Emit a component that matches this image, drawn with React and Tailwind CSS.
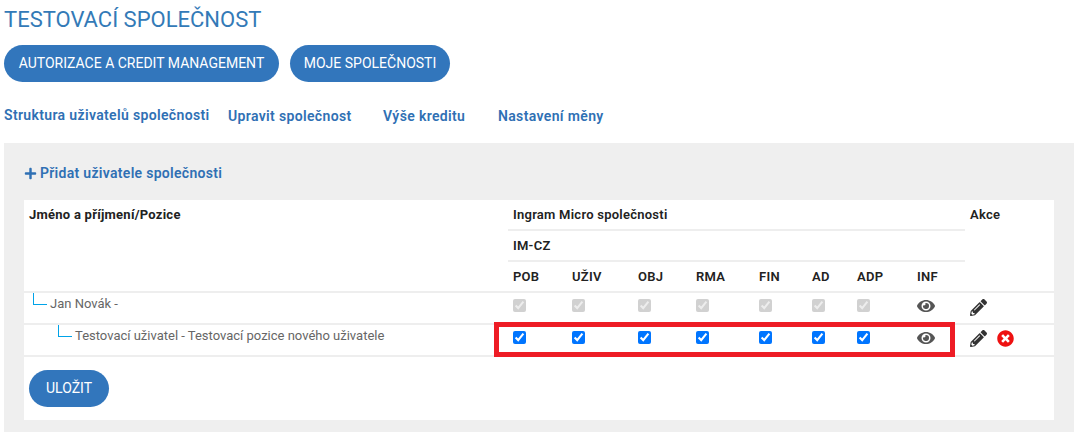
import { FaEye, FaPencilAlt, FaPlus, FaTimesCircle } from 'react-icons/fa'

const columns = [
    ['POB', 'w-[59px]'],
    ['UŽIV', 'w-[66px]'],
    ['OBJ', 'w-[58px]'],
    ['RMA', 'w-[63px]'],
    ['FIN', 'w-[53px]'],
    ['AD', 'w-[45px]'],
    ['ADP', 'w-[60px]'],
]

const PermissionCells = ({ disabled }) => (
    <>
        {columns.map(([name]) => (
            <td key={name} className="pl-[5px] align-top pt-[6px]">
                <input type="checkbox" defaultChecked disabled={disabled} className="block m-0 w-[13px] h-[13px]" />
            </td>
        ))}
        <td className="pl-[5px] align-top pt-[5px]">
            <FaEye className="w-[18px] h-[18px] text-[#555] -mt-[1px]" />
        </td>
    </>
)

const TreeLabel = ({ indent, children }) => (
    <div className={`flex items-start h-full ${indent}`}>
        <span className="block w-[14px] h-[12px] border-l border-b border-[#00a3e8] mr-[3px] shrink-0" />
        <span className="text-[13px] tracking-normal leading-[22px] text-[#666]">{children}</span>
    </div>
)

export default function App() {
    return (
        <main className="h-[437px] overflow-hidden bg-white pt-[8px] px-[4px] font-['Roboto',sans-serif]">
            <h1 className="text-[22px] leading-[24px] text-[#337ab7]">TESTOVACÍ SPOLEČNOST</h1>

            <div className="flex gap-[11px] mt-[13px]">
                <button className="h-[37px] w-[275px] rounded-full bg-[#3276bc] text-white text-[14px]">AUTORIZACE A CREDIT MANAGEMENT</button>
                <button className="h-[37px] w-[160px] rounded-full bg-[#3276bc] text-white text-[14px]">MOJE SPOLEČNOSTI</button>
            </div>

            <nav className="flex mt-[24px] h-[20px] text-[14px] tracking-[0.35px] leading-[20px] font-semibold text-[#2f70b4]">
                <a className="w-[224px] -mt-[1px]">Struktura uživatelů společnosti</a>
                <a className="w-[155px]">Upravit společnost</a>
                <a className="w-[115px]">Výše kreditu</a>
                <a>Nastavení měny</a>
            </nav>

            <section className="mt-[17px] w-[1070px] h-[289px] bg-[#efefef] pt-[20px] px-[20px]">
                <a className="flex items-center h-[20px] text-[14px] tracking-[0.3px] font-semibold text-[#2f70b4]">
                    <FaPlus className="w-[13px] h-[13px] mr-[3px]" />
                    Přidat uživatele společnosti
                </a>

                <div className="relative mt-[17px] h-[220px] bg-white">
                    <table className="w-[1030px] table-fixed border-collapse text-[13px] tracking-[0.25px] text-[#222]">
                        <colgroup>
                            <col className="w-[484px]" />
                            {columns.map(([name, width]) => <col key={name} className={width} />)}
                            <col className="w-[53px]" />
                            <col className="w-[89px]" />
                        </colgroup>
                        <thead>
                            <tr className="h-[30px]">
                                <th rowSpan={3} className="pl-[5px] pt-[5px] text-left align-top font-bold border-b-2 border-[#eeeeee]">Jméno a příjmení/Pozice</th>
                                <th colSpan={8} className="pl-[5px] text-left font-semibold border-b-2 border-[#eeeeee]">Ingram Micro společnosti</th>
                                <th rowSpan={3} className="pl-[5px] pt-[5px] text-left align-top font-semibold border-b-2 border-[#eeeeee]">Akce</th>
                            </tr>
                            <tr className="h-[31px]">
                                <th colSpan={8} className="pl-[5px] text-left font-semibold border-b-2 border-[#eeeeee]">IM-CZ</th>
                            </tr>
                            <tr className="h-[31px]">
                                {columns.map(([name]) => (
                                    <th key={name} className="pl-[5px] text-left font-semibold border-b-2 border-[#eeeeee]">{name}</th>
                                ))}
                                <th className="pl-[5px] text-left font-semibold border-b-2 border-[#eeeeee]">INF</th>
                            </tr>
                        </thead>
                        <tbody>
                            <tr className="h-[32px] border-b-2 border-[#eeeeee]">
                                <td className="align-top"><TreeLabel indent="pl-[9px]">Jan Novák -</TreeLabel></td>
                                <PermissionCells disabled />
                                <td className="pl-[5px] align-top pt-[5px]">
                                    <FaPencilAlt className="w-[17px] h-[17px] text-[#333] mt-[1px]" />
                                </td>
                            </tr>
                            <tr className="h-[32px] border-b-2 border-[#eeeeee]">
                                <td className="align-top"><TreeLabel indent="pl-[34px]">Testovací uživatel - Testovací pozice nového uživatele</TreeLabel></td>
                                <PermissionCells />
                                <td className="pl-[5px] align-top pt-[5px]">
                                    <div className="flex items-center gap-[10px]">
                                        <FaPencilAlt className="w-[17px] h-[17px] text-[#333]" />
                                        <FaTimesCircle className="w-[17px] h-[17px] text-[#ee1111]" />
                                    </div>
                                </td>
                            </tr>
                        </tbody>
                    </table>

                    <button className="block ml-[5px] mt-[13px] h-[37px] w-[80px] rounded-full bg-[#3276bc] text-white text-[14px]">ULOŽIT</button>

                    {/* zvýraznění řádku */}
                    <div className="absolute left-[470px] top-[122px] w-[461px] h-[35px] border-[5px] border-[#ee1c25] pointer-events-none" />
                </div>
            </section>
        </main>
    )
}
